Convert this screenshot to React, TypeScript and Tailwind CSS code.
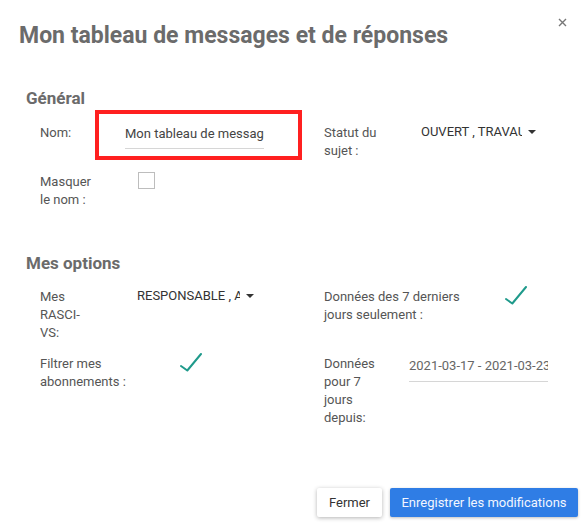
import React from "react";

function Check() {
  return (
    <svg width="22" height="19" viewBox="0 0 22 19" className="block">
      <polyline points="1,13 7.3,17.5 21,1" fill="none" stroke="#1f9a8b" strokeWidth="2" strokeLinecap="round" strokeLinejoin="round" />
    </svg>
  );
}

function Caret() {
  return <span className="ml-[6px] inline-block w-0 h-0 border-l-[4px] border-r-[4px] border-t-[4px] border-l-transparent border-r-transparent border-t-[#333]" />;
}

export default function App() {
  return (
    <div className="relative w-[588px] h-[529px] bg-white flex flex-col font-[Roboto,sans-serif] text-[#555]">
      <svg className="absolute left-[558px] top-[18px]" width="9" height="9" viewBox="0 0 9 9">
        <path d="M1 1L8 8M8 1L1 8" stroke="#777" strokeWidth="1.4" />
      </svg>
      <h1 className="mt-[22px] ml-[19px] text-[23px] leading-[28px] font-bold text-[#6b6b6b]">
        Mon tableau de messages et de réponses
      </h1>

      <h2 className="mt-[36px] ml-[26px] text-[17px] leading-[24px] font-bold text-[#6b6b6b]">Général</h2>

      <div className="flex items-start">
        <div className="w-[324px] pl-[40px] flex items-start">
          <div className="w-[55px] mt-[14px] text-[13px] leading-[18px]">Nom:</div>
          <div className="w-[207px] h-[50px] border-[4px] border-[#ff2020] pl-[26px] pr-[34px] pt-[11px]">
            <div className="border-b border-[#d6d6d6] pb-[5px] text-[13px] leading-[18px] text-[#444] whitespace-nowrap overflow-hidden">
              Mon tableau de messages et de réponses
            </div>
          </div>
        </div>
        <div className="flex items-start">
          <div className="w-[97px] pr-[27px] mt-[14px] text-[13px] leading-[18px]">Statut du sujet :</div>
          <div className="mt-[12.5px] flex items-center text-[13px] leading-[18px] text-[#333]">
            <span className="w-[101px] overflow-hidden whitespace-nowrap">OUVERT , TRAVAUX EN COURS</span>
            <Caret />
          </div>
        </div>
      </div>

      <div className="mt-[12px] pl-[40px] flex items-start">
        <div className="w-[98px] pr-[40px] mt-[0.5px] text-[13px] leading-[18px]">Masquer le nom :</div>
        <div className="w-[17px] h-[17px] border border-[#bdbdbd]" />
      </div>

      <h2 className="mt-[42px] ml-[26px] text-[17px] leading-[24px] font-bold text-[#6b6b6b]">Mes options</h2>

      <div className="mt-[12px] flex items-start">
        <div className="w-[324px] pl-[40px] flex items-start">
          <div className="w-[97px] pr-[50px] mt-[1.5px] text-[13px] leading-[18px]">Mes RASCI-VS:</div>
          <div className="flex items-center text-[13px] leading-[18px] text-[#333]">
            <span className="w-[103px] overflow-hidden whitespace-nowrap">RESPONSABLE , ACCOUNTABLE</span>
            <Caret />
          </div>
        </div>
        <div className="flex items-start">
          <div className="w-[182px] pr-[35px] mt-[1.5px] text-[13px] leading-[18px]">Données des 7 derniers jours seulement :</div>
          <div className="-ml-[1px] -mt-[1px]"><Check /></div>
        </div>
      </div>

      <div className="mt-[10.5px] flex items-start">
        <div className="w-[324px] pl-[40px] flex items-start">
          <div className="w-[140px] pr-[45px] mt-[2.5px] text-[13px] leading-[18px]">Filtrer mes abonnements :</div>
          <Check />
        </div>
        <div className="flex items-start">
          <div className="w-[85px] pr-[30px] mt-[2.5px] text-[13px] leading-[18px]">Données pour 7 jours depuis:</div>
          <div className="mt-[4px] w-[139px] border-b border-[#d6d6d6] pb-[6px] text-[13px] leading-[18px] text-[#666] whitespace-nowrap overflow-hidden">
            2021-03-17 - 2021-03-23
          </div>
        </div>
      </div>

      <div className="mt-auto mb-[12px] mr-[10px] flex justify-end gap-[8px]">
        <button className="h-[29px] px-[12px] rounded-[2px] bg-white text-[#333] text-[13px] shadow-[0_1px_4px_rgba(0,0,0,0.3)]">Fermer</button>
        <button className="h-[29px] w-[188px] rounded-[2px] bg-[#2f7de5] text-[#f2f6ff] text-[13px] shadow-[0_1px_3px_rgba(0,0,0,0.25)]">Enregistrer les modifications</button>
      </div>
    </div>
  );
}
